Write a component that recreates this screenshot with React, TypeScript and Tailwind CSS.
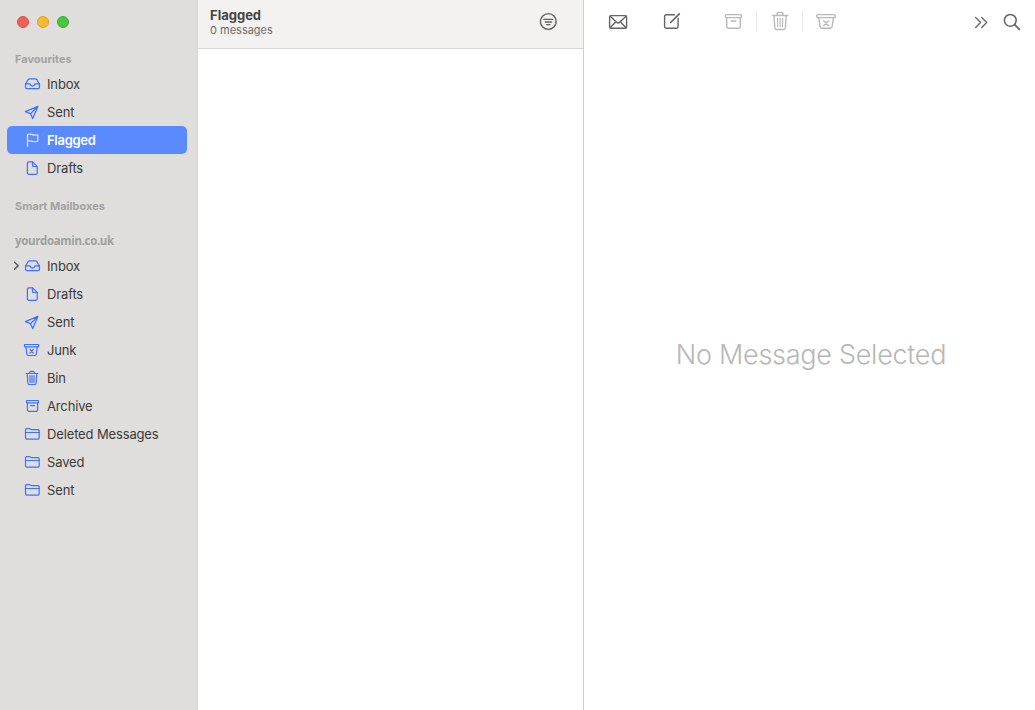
import React from "react"

type IconName = "inbox" | "sent" | "flag" | "draft" | "junk" | "bin" | "archive" | "folder"

interface MailboxType {
    name: string,
    icon: IconName,
    selected?: boolean,
    expandable?: boolean
}

const favourites: MailboxType[] = [
    { name: "Inbox", icon: "inbox" },
    { name: "Sent", icon: "sent" },
    { name: "Flagged", icon: "flag", selected: true },
    { name: "Drafts", icon: "draft" },
]

const mailboxes: MailboxType[] = [
    { name: "Inbox", icon: "inbox", expandable: true },
    { name: "Drafts", icon: "draft" },
    { name: "Sent", icon: "sent" },
    { name: "Junk", icon: "junk" },
    { name: "Bin", icon: "bin" },
    { name: "Archive", icon: "archive" },
    { name: "Deleted Messages", icon: "folder" },
    { name: "Saved", icon: "folder" },
    { name: "Sent", icon: "folder" },
]

const icons: Record<IconName, React.ReactNode> = {
    inbox: (
        <>
            <path d="M2.5 9.2V12a1.6 1.6 0 001.6 1.6h10.8a1.6 1.6 0 001.6-1.6V9.2L13.9 4.6a1.8 1.8 0 00-1.5-.8H6.6a1.8 1.8 0 00-1.5.8z" />
            <path d="M2.5 8.8h4.1c.5 0 .7.3.8.7a2.15 2.15 0 004.2 0c.1-.4.3-.7.8-.7h4.1" />
        </>
    ),
    sent: <path d="M14.9 3.4L2.4 8.6l5.1 2.1 2.2 4.9zM14.9 3.4l-7.4 7.3" />,
    flag: <path d="M4.5 15.3V3.5c1.7-.8 3.4-.5 5 .1 1.7.6 3.4.7 5.3.1v6.6c-1.9.7-3.6.5-5.3 0-1.6-.5-3.3-.7-5 0" />,
    draft: (
        <>
            <path d="M5.8 2.8h3.8l4.6 4.6v6.5a1.4 1.4 0 01-1.4 1.4h-7a1.4 1.4 0 01-1.4-1.4V4.2a1.4 1.4 0 011.4-1.4z" />
            <path d="M9.5 3v3.5a1 1 0 001 1H14" />
        </>
    ),
    junk: (
        <>
            <rect x="1.5" y="3.5" width="14.2" height="2.4" rx=".6" />
            <path d="M3 6l.9 7.3a1.3 1.3 0 001.3 1.2H12a1.3 1.3 0 001.3-1.2L14.2 6M7 8.5l3.3 3.5M10.3 8.5L7 12" />
        </>
    ),
    bin: (
        <>
            <path d="M3.2 4.5h11.6M6.8 4.4V3.3a.9.9 0 01.9-.9h2.6a.9.9 0 01.9.9v1.1M4.2 4.7l.7 9.5a1.4 1.4 0 001.4 1.3h5.4a1.4 1.4 0 001.4-1.3l.7-9.5" />
            <path d="M6.9 6.6l.2 6.8M9 6.6v6.8M11.1 6.6l-.2 6.8" />
        </>
    ),
    archive: (
        <>
            <rect x="3.5" y="3.5" width="12" height="2.3" rx=".6" />
            <path d="M4.4 6v6.9a1.4 1.4 0 001.4 1.4h7.4a1.4 1.4 0 001.4-1.4V6M7.5 8.6h4" />
        </>
    ),
    folder: (
        <>
            <path d="M2.5 12.7V4.9a1.3 1.3 0 011.3-1.3h2.6c1 0 1.2 1.1 2.2 1.1h6.2a1.4 1.4 0 011.4 1.4v6.6a1.4 1.4 0 01-1.4 1.4H3.9a1.4 1.4 0 01-1.4-1.4z" />
            <path d="M2.5 7.5h13.7" />
        </>
    ),
}

const MailboxRow: React.FC<{ mailbox: MailboxType }> = ({ mailbox }) => {
    return (
        <li className={mailbox.selected ? "relative mx-[7px] flex h-7 w-[180px] items-center rounded-[5px] bg-[#5a8aff] pl-4 text-white" : "relative mx-[7px] flex h-7 w-[180px] items-center pl-4 text-[#3b3b3a]"}>
            {mailbox.expandable && (
                <svg className="absolute top-[9px] left-[5px] h-[10px] w-[8px]" viewBox="0 0 8 10" fill="none" stroke="#5c5c5b" strokeWidth="1.5" strokeLinecap="round" strokeLinejoin="round">
                    <path d="M2.6 1.3L6.2 4.7 2.6 8.1" />
                </svg>
            )}
            <svg className={mailbox.selected ? "h-[18px] w-[18px] shrink-0 text-[#dfe8ff]" : "h-[18px] w-[18px] shrink-0 text-[#3f70fa]"} viewBox="0 0 18 18" fill="none" stroke="currentColor" strokeWidth="1.2" strokeLinecap="round" strokeLinejoin="round">
                {icons[mailbox.icon]}
            </svg>
            <span className={mailbox.selected ? "ml-1.5 text-[13px] leading-4 font-semibold tracking-[-0.28px] whitespace-nowrap" : "ml-1.5 text-[13px] leading-4 tracking-[-0.14px] whitespace-nowrap"}>{mailbox.name}</span>
        </li>
    )
}

const ToolIcon: React.FC<{ className: string, children: React.ReactNode }> = ({ className, children }) => {
    return (
        <svg className={"h-6 w-6 shrink-0 " + className} viewBox="0 0 24 24" fill="none" stroke="currentColor" strokeWidth="1.4" strokeLinecap="round" strokeLinejoin="round">
            {children}
        </svg>
    )
}

const Sidebar: React.FC = () => {
    return (
        <aside className="flex w-[198px] shrink-0 flex-col border-r-2 border-[#dadad8] bg-[#dfdedc]">
            <div className="flex gap-2 pt-4 pl-[17px]">
                <span className="h-3 w-3 rounded-full border border-[#dc4f48] bg-[#f05f58]"></span>
                <span className="h-3 w-3 rounded-full border border-[#dfa023] bg-[#f6ba2e]"></span>
                <span className="h-3 w-3 rounded-full border border-[#35ac2e] bg-[#47c93f]"></span>
            </div>
            <h2 className="mt-[23px] pl-[15px] text-[11px] leading-4 font-bold text-[#a3a2a1]">Favourites</h2>
            <ul className="mt-[3px]">
                {favourites.map((mailbox, index) => <MailboxRow key={index} mailbox={mailbox} />)}
            </ul>
            <h2 className="mt-4 pl-[15px] text-[11px] leading-4 font-bold text-[#a3a2a1]">Smart Mailboxes</h2>
            <h2 className="mt-[19px] pl-[15px] font-['Open_Sans',sans-serif] text-[11.5px] leading-4 font-bold tracking-[-0.35px] text-[#9f9e9d]">yourdoamin.co.uk</h2>
            <ul className="mt-[3px]">
                {mailboxes.map((mailbox, index) => <MailboxRow key={index} mailbox={mailbox} />)}
            </ul>
        </aside>
    )
}

const MessageList: React.FC = () => {
    return (
        <section className="flex w-[386px] shrink-0 flex-col border-r border-[#cfcfcf] bg-white">
            <header className="flex h-[49px] justify-between border-b border-[#d8d7d6] bg-[#f3f2f0] pr-[23px] pl-3">
                <div className="pt-[7px]">
                    <h1 className="text-[13px] leading-4 font-bold text-[#454443]">Flagged</h1>
                    <p className="mt-px text-[11px] leading-[13px] text-[#6d6c6b]">0 messages</p>
                </div>
                <ToolIcon className="mt-[10px] text-[#60605f]">
                    <circle cx="12.3" cy="11.5" r="7.9" />
                    <path d="M8 9.4h8.6M9.3 12h6M10.7 14.6h3.2" />
                </ToolIcon>
            </header>
        </section>
    )
}

const MessagePane: React.FC = () => {
    return (
        <main className="flex min-w-0 flex-1 flex-col bg-white">
            <div className="flex h-[49px] shrink-0 pt-[10px] pr-[11px] pl-[22px]">
                <ToolIcon className="text-[#656565]">
                    <rect x="3.6" y="5.6" width="17" height="12.6" rx="1.5" />
                    <path d="M4.2 6.3l6.4 5.9a2.2 2.2 0 003 0L20 6.3M4.2 17.7l5.2-5.5M20 17.7l-5.2-5.5" />
                </ToolIcon>
                <ToolIcon className="ml-[30px] text-[#656565]">
                    <path d="M14.5 4.8H6.3a1.7 1.7 0 00-1.7 1.7v10.1a1.7 1.7 0 001.7 1.7h10.1a1.7 1.7 0 001.7-1.7V8.3" />
                    <path d="M10.7 12.5L19.3 3.8" strokeWidth="1.7" />
                </ToolIcon>
                <ToolIcon className="ml-[37px] text-[#b9b9b9]">
                    <rect x="4.6" y="4.6" width="15.8" height="3" rx=".8" />
                    <path d="M5.7 7.8v8.6a1.8 1.8 0 001.8 1.8h10a1.8 1.8 0 001.8-1.8V7.8M10 11h5" />
                </ToolIcon>
                <div className="mt-px ml-[11px] h-[21px] w-px bg-[#e9e9e9]"></div>
                <ToolIcon className="ml-[11px] text-[#b9b9b9]">
                    <path d="M4.5 5.5h15.2M9.1 5.3V3.7c0-.7.5-1.2 1.2-1.2h3.5c.7 0 1.2.5 1.2 1.2v1.6M6 5.7l.8 12.1a1.8 1.8 0 001.8 1.7h7a1.8 1.8 0 001.8-1.7l.8-12.1" />
                    <path d="M9.5 8.2l.2 8.6M12.1 8.2v8.6M14.7 8.2l-.2 8.6" strokeWidth="1.1" />
                </ToolIcon>
                <div className="mt-px ml-[10px] h-[21px] w-px bg-[#e9e9e9]"></div>
                <ToolIcon className="ml-[11px] text-[#b9b9b9]">
                    <rect x="2.8" y="4.6" width="18.4" height="3" rx=".8" />
                    <path d="M4.7 7.8l1.4 8.9a1.8 1.8 0 001.8 1.5h8.4a1.8 1.8 0 001.8-1.5l1.4-8.9M9.7 10.7l4.8 4.8M14.5 10.7l-4.8 4.8" />
                </ToolIcon>
                <ToolIcon className="ml-auto text-[#6b6b6b]">
                    <path d="M6.6 7.4l5 5.1-5 5.1M12.7 7.4l5 5.1-5 5.1" />
                </ToolIcon>
                <ToolIcon className="ml-[7px] text-[#656565]">
                    <circle cx="10.3" cy="10.3" r="5.9" strokeWidth="1.5" />
                    <path d="M14.7 14.7l4.6 4.6" strokeWidth="1.9" />
                </ToolIcon>
            </div>
            <div className="flex flex-1 items-center justify-center">
                <p className="mb-[50px] ml-[3px] text-[27px] leading-8 font-light tracking-[-0.28px] whitespace-nowrap text-[#b7b7b7]">No Message Selected</p>
            </div>
        </main>
    )
}

export default function App() {
    return (
        <div className="flex h-[710px] w-[1035px] overflow-hidden bg-white font-['Inter',sans-serif]">
            <Sidebar />
            <MessageList />
            <MessagePane />
        </div>
    )
}
